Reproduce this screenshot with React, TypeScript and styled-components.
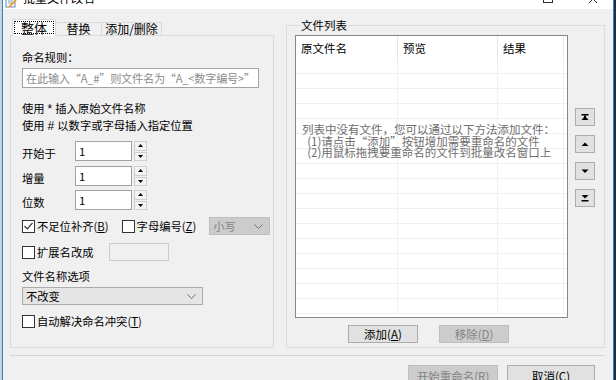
import React from "react";
import styled, { createGlobalStyle } from "styled-components";

const GlobalStyle = createGlobalStyle`
  html, body { margin: 0; padding: 0; }
  body {
    background: #d6d6d6;
    font-family: "Microsoft YaHei", "Noto Sans CJK SC", "Noto Sans", sans-serif;
    font-size: 11.3px;
    color: #000;
    overflow: hidden;
  }
  * { box-sizing: border-box; }
`;

const Page = styled.div`
  display: flex;
  width: 616px;
  height: 380px;
  overflow: hidden;
`;

const Edge = styled.div<{ $w: number; $bg: string }>`
  width: ${(p) => p.$w}px;
  flex: none;
  background: ${(p) => p.$bg};
`;

const Window = styled.div`
  width: 612px;
  height: 380px;
  flex: none;
  border-left: 1px solid #2f7fd2;
  border-right: 1px solid #2f7fd2;
  display: flex;
  flex-direction: column;
  background: #f0f0f0;
  overflow: hidden;
`;

const TitleBar = styled.div`
  height: 9px;
  flex: none;
  background: #fff;
  display: flex;
  align-items: flex-start;
  overflow: hidden;
  padding-left: 2px;
`;

const TitleText = styled.div`
  margin-top: -10px;
  margin-left: 6px;
  line-height: 16px;
  font-size: 12px;
  color: #000;
`;

const TitleControls = styled.div`
  margin-left: auto;
  margin-right: 14px;
  display: flex;
  gap: 34px;
`;

const Body = styled.div`
  flex: 1;
  display: flex;
  flex-direction: column;
`;

const ContentRow = styled.div`
  display: flex;
  align-items: flex-start;
  gap: 12px;
  padding: 0 7px 0 7px;
`;

const LeftColumn = styled.div`
  width: 264px;
  flex: none;
  margin-top: 10px;
  display: flex;
  flex-direction: column;
`;

const TabBar = styled.div`
  display: flex;
  align-items: flex-end;
  height: 17px;
  padding-left: 2px;
  position: relative;
  z-index: 1;
`;

const Tab = styled.div<{ $active?: boolean; $w: number }>`
  width: ${(p) => p.$w}px;
  height: ${(p) => (p.$active ? 17 : 14)}px;
  border: 1px solid #d9d9d9;
  border-bottom: ${(p) => (p.$active ? "none" : "1px solid #d9d9d9")};
  border-left: ${(p) => (p.$active ? "1px solid #d9d9d9" : "none")};
  background: ${(p) => (p.$active ? "#ffffff" : "#f0f0f0")};
  display: flex;
  align-items: center;
  justify-content: center;
  line-height: 14px;
  font-size: 12px;
  padding: ${(p) => (p.$active ? "1px 1px 2px" : "0")};
`;

const FocusLabel = styled.span`
  display: flex;
  align-items: center;
  justify-content: center;
  width: 100%;
  height: 100%;
  border: 1px dotted #000;
  font-size: 13px;
`;

const TabPanel = styled.div`
  margin-top: -1px;
  height: 313px;
  border: 1px solid #d9d9d9;
  background: #f0f0f0;
  padding: 0 0 0 11px;
  display: flex;
  flex-direction: column;
`;

const Line = styled.div<{ $mt: number }>`
  margin-top: ${(p) => p.$mt}px;
  height: 16px;
  line-height: 16px;
  white-space: nowrap;
`;

const Sym = styled.span`
  font-family: "Liberation Sans", sans-serif;
  font-size: 12px;
  padding: 0 3px;
`;

const TextInput = styled.div<{ $mt?: number; $w: number; $h: number; $disabled?: boolean; $ml?: number }>`
  margin-top: ${(p) => p.$mt ?? 0}px;
  margin-left: ${(p) => p.$ml ?? 0}px;
  width: ${(p) => p.$w}px;
  height: ${(p) => p.$h}px;
  border: 1px solid ${(p) => (p.$disabled ? "#cccccc" : "#a2a2a2")};
  background: ${(p) => (p.$disabled ? "#f0f0f0" : "#fff")};
  display: flex;
  align-items: center;
  padding-left: 3px;
  flex: none;
  white-space: nowrap;
  overflow: hidden;
`;

const Placeholder = styled.span`
  color: #8c8c8c;
  font-size: 11.2px;
  letter-spacing: -0.25px;
`;

const SpinRow = styled.div<{ $mt: number; $h: number }>`
  margin-top: ${(p) => p.$mt}px;
  height: ${(p) => p.$h}px;
  display: flex;
  align-items: stretch;
`;

const SpinLabel = styled.div`
  width: 53px;
  display: flex;
  align-items: center;
  padding-top: 3px;
`;

const Spinner = styled.div`
  margin-left: 2px;
  width: 13px;
  display: flex;
  flex-direction: column;
  gap: 1px;
`;

const SpinBtn = styled.div`
  flex: 1;
  border: 1px solid #cfcfcf;
  background: #f3f3f3;
  display: flex;
  align-items: center;
  justify-content: center;
`;

const OptionRow = styled.div<{ $mt: number }>`
  margin-top: ${(p) => p.$mt}px;
  height: 18px;
  display: flex;
  align-items: center;
  white-space: nowrap;
`;

const Check = styled.span<{ $ml?: number }>`
  width: 13px;
  height: 13px;
  border: 1px solid #333;
  background: #fff;
  flex: none;
  margin-left: ${(p) => p.$ml ?? 0}px;
  margin-right: 2px;
  display: flex;
  align-items: center;
  justify-content: center;
`;

const Key = styled.span`
  text-decoration: underline;
`;

const Select = styled.div<{ $w: number; $disabled?: boolean; $ml?: number; $mt?: number }>`
  width: ${(p) => p.$w}px;
  height: 18px;
  margin-left: ${(p) => p.$ml ?? 0}px;
  margin-top: ${(p) => p.$mt ?? 0}px;
  border: 1px solid ${(p) => (p.$disabled ? "#bfbfbf" : "#acacac")};
  background: ${(p) => (p.$disabled ? "#cccccc" : "#e5e5e5")};
  color: ${(p) => (p.$disabled ? "#838383" : "#000")};
  display: flex;
  align-items: center;
  justify-content: space-between;
  padding: 0 6px 0 3px;
  flex: none;
`;

const RightColumn = styled.fieldset`
  width: 319px;
  flex: none;
  margin: 9px 0 0 0;
  min-width: 0;
  height: 330px;
  border: 1px solid #dcdcdc;
  padding: 0 0 0 8px;
  display: block;
`;

const Legend = styled.legend`
  padding: 0 1px;
  margin-left: 5px;
  line-height: 14px;
  font-size: 11.5px;
`;

const ListArea = styled.div`
  display: flex;
  align-items: flex-start;
  margin-top: 3px;
`;

const ListView = styled.div`
  width: 273px;
  height: 283px;
  border: 1px solid #828790;
  background: #fff;
  position: relative;
  overflow: hidden;
  flex: none;
`;

const Grid = styled.div`
  display: grid;
  grid-template-columns: 102px 100px 66px 1fr;
  grid-auto-rows: 15px;
`;

const HeaderRow = styled.div`
  display: grid;
  grid-template-columns: 102px 100px 66px 1fr;
  height: 23px;
`;

const HeaderCell = styled.div<{ $last?: boolean }>`
  height: 23px;
  border-right: ${(p) => (p.$last ? "none" : "1px solid #e5e5e5")};
  display: flex;
  align-items: center;
  padding-left: 5px;
  font-size: 11.5px;
`;

const Cell = styled.div<{ $last?: boolean }>`
  border-bottom: 1px solid #f0f0f0;
  border-right: ${(p) => (p.$last ? "none" : "1px solid #f0f0f0")};
`;

const EmptyMessage = styled.div`
  position: absolute;
  left: 6px;
  top: 88px;
  color: #6e6e6e;
  font-size: 11.5px;
  line-height: 11.5px;
  white-space: pre;
`;

const SideButtons = styled.div`
  margin-left: 7px;
  margin-top: 73px;
  display: flex;
  flex-direction: column;
  gap: 9px;
`;

const IconButton = styled.div`
  width: 20px;
  height: 18px;
  border: 1px solid #adadad;
  background: #e1e1e1;
  display: flex;
  align-items: center;
  justify-content: center;
`;

const ListButtons = styled.div`
  display: flex;
  gap: 21px;
  margin-top: 7px;
  padding-left: 53px;
`;

const Button = styled.div<{ $w: number; $disabled?: boolean }>`
  width: ${(p) => p.$w}px;
  height: 18px;
  border: 1px solid ${(p) => (p.$disabled ? "#bfbfbf" : "#adadad")};
  background: ${(p) => (p.$disabled ? "#cccccc" : "#e1e1e1")};
  color: ${(p) => (p.$disabled ? "#838383" : "#000")};
  display: flex;
  align-items: center;
  justify-content: center;
  line-height: 16px;
  font-size: 11.5px;
  flex: none;
`;

const Separator = styled.div`
  margin: 7px 8px 0 7px;
  height: 1px;
  background: #d5d5d5;
`;

const Footer = styled.div`
  display: flex;
  justify-content: flex-end;
  gap: 9px;
  padding-right: 18px;
  margin-top: 9px;
`;

const FooterButton = styled(Button)`
  height: 23px;
  align-items: flex-start;
  padding-top: 2px;
`;

const Chevron = () => (
  <svg width="9" height="5" viewBox="0 0 9 5">
    <path d="M0.5 0.5 L4.5 4.5 L8.5 0.5" fill="none" stroke="#6d6d6d" strokeWidth="1" />
  </svg>
);

const Tri = ({ up }: { up?: boolean }) => (
  <svg width="5" height="3" viewBox="0 0 5 3">
    <path d={up ? "M0 3 L2.5 0 L5 3 Z" : "M0 0 L5 0 L2.5 3 Z"} fill="#000" />
  </svg>
);

const MoveIcon = ({ kind }: { kind: "top" | "up" | "down" | "bottom" }) => (
  <svg width="8" height="8" viewBox="0 0 8 8">
    {kind === "top" && (
      <>
        <rect x="0.5" y="1" width="7" height="1.5" fill="#000" />
        <path d="M4 3 L7.5 7 L0.5 7 Z" fill="#000" />
        <rect x="3" y="2.5" width="2" height="3" fill="#000" />
      </>
    )}
    {kind === "up" && <path d="M4 2.5 L7.5 6 L0.5 6 Z" fill="#000" />}
    {kind === "down" && <path d="M0.5 2.5 L7.5 2.5 L4 6 Z" fill="#000" />}
    {kind === "bottom" && (
      <>
        <path d="M0.5 1 L7.5 1 L4 4.5 Z" fill="#000" />
        <rect x="0.5" y="6" width="7" height="1.5" fill="#000" />
      </>
    )}
  </svg>
);

const AppIcon = () => (
  <svg width="12" height="9" viewBox="0 0 12 9">
    <rect x="1" y="-4" width="9" height="11" fill="#fff" stroke="#6b8bb5" strokeWidth="1" />
    <path d="M3 1 H8 M3 3 H8" stroke="#7fa3cf" strokeWidth="1" />
    <path d="M4 7 L11 0" stroke="#e8a33c" strokeWidth="2" />
  </svg>
);

const WindowControls = () => (
  <TitleControls>
    <svg width="11" height="9" viewBox="0 0 11 9">
      <rect x="0.5" y="-6" width="9" height="8.5" fill="none" stroke="#333" strokeWidth="1" />
    </svg>
    <svg width="11" height="9" viewBox="0 0 11 9">
      <path d="M0 -6 L9 3 M10 -6 L1 3" stroke="#333" strokeWidth="1" />
    </svg>
  </TitleControls>
);

const ROWS = 17;

export default function App() {
  return (
    <>
      <GlobalStyle />
      <Page>
        <Edge $w={2} $bg="#cfd3d8" />
        <Window>
          <TitleBar>
            <AppIcon />
            <TitleText>批量文件改名</TitleText>
            <WindowControls />
          </TitleBar>
          <Body>
            <ContentRow>
              <LeftColumn>
                <TabBar>
                  <Tab $active $w={44}>
                    <FocusLabel>整体</FocusLabel>
                  </Tab>
                  <Tab $w={46}>替换</Tab>
                  <Tab $w={60}>添加/删除</Tab>
                </TabBar>
                <TabPanel>
                  <Line $mt={13}>命名规则：</Line>
                  <TextInput $mt={3} $w={237} $h={20}>
                    <Placeholder>在此输入“A_#”则文件名为“A_&lt;数字编号&gt;”</Placeholder>
                  </TextInput>
                  <Line $mt={12}>
                    使用<Sym>*</Sym>插入原始文件名称
                  </Line>
                  <Line $mt={1}>
                    使用<Sym>#</Sym>以数字或字母插入指定位置
                  </Line>
                  {[
                    { label: "开始于", mt: 8 },
                    { label: "增量", mt: 5 },
                    { label: "位数", mt: 4 },
                  ].map((r) => (
                    <SpinRow key={r.label} $mt={r.mt} $h={20}>
                      <SpinLabel>{r.label}</SpinLabel>
                      <TextInput $w={57} $h={20}>1</TextInput>
                      <Spinner>
                        <SpinBtn>
                          <Tri up />
                        </SpinBtn>
                        <SpinBtn>
                          <Tri />
                        </SpinBtn>
                      </Spinner>
                    </SpinRow>
                  ))}
                  <OptionRow $mt={7}>
                    <Check>
                      <svg width="9" height="8" viewBox="0 0 9 8">
                        <path d="M0.5 4 L3.3 6.8 L8.5 0.8" fill="none" stroke="#333" strokeWidth="1.2" />
                      </svg>
                    </Check>
                    不足位补齐(<Key>B</Key>)
                    <Check $ml={13} />
                    字母编号(<Key>Z</Key>)
                    <Select $w={61} $disabled $ml={13}>
                      <span>小写</span>
                      <Chevron />
                    </Select>
                  </OptionRow>
                  <OptionRow $mt={8}>
                    <Check />
                    扩展名改成
                    <TextInput $w={60} $h={18} $disabled $ml={15} />
                  </OptionRow>
                  <Line $mt={7}>文件名称选项</Line>
                  <Select $w={181} $mt={3}>
                    <span>不改变</span>
                    <Chevron />
                  </Select>
                  <OptionRow $mt={7}>
                    <Check />
                    自动解决命名冲突(<Key>T</Key>)
                  </OptionRow>
                </TabPanel>
              </LeftColumn>
              <RightColumn>
                <Legend>文件列表</Legend>
                <ListArea>
                  <ListView>
                    <HeaderRow>
                      <HeaderCell>原文件名</HeaderCell>
                      <HeaderCell>预览</HeaderCell>
                      <HeaderCell>结果</HeaderCell>
                      <HeaderCell $last />
                    </HeaderRow>
                    <Grid>
                      {Array.from({ length: ROWS }).flatMap((_, i) => [
                        <Cell key={`a${i}`} />,
                        <Cell key={`b${i}`} />,
                        <Cell key={`c${i}`} />,
                        <Cell key={`d${i}`} $last />,
                      ])}
                    </Grid>
                    <EmptyMessage>
                      {"列表中没有文件，您可以通过以下方法添加文件：\n  (1)请点击“添加”按钮增加需要重命名的文件\n  (2)用鼠标拖拽要重命名的文件到批量改名窗口上"}
                    </EmptyMessage>
                  </ListView>
                  <SideButtons>
                    <IconButton>
                      <MoveIcon kind="top" />
                    </IconButton>
                    <IconButton>
                      <MoveIcon kind="up" />
                    </IconButton>
                    <IconButton>
                      <MoveIcon kind="down" />
                    </IconButton>
                    <IconButton>
                      <MoveIcon kind="bottom" />
                    </IconButton>
                  </SideButtons>
                </ListArea>
                <ListButtons>
                  <Button $w={70}>
                    添加(<Key>A</Key>)
                  </Button>
                  <Button $w={70} $disabled>
                    移除(<Key>D</Key>)
                  </Button>
                </ListButtons>
              </RightColumn>
            </ContentRow>
            <Separator />
            <Footer>
              <FooterButton $w={90} $disabled>
                开始重命名(<Key>R</Key>)
              </FooterButton>
              <FooterButton $w={88}>
                取消(<Key>C</Key>)
              </FooterButton>
            </Footer>
          </Body>
        </Window>
        <Edge $w={2} $bg="#2a2a30" />
      </Page>
    </>
  );
}
